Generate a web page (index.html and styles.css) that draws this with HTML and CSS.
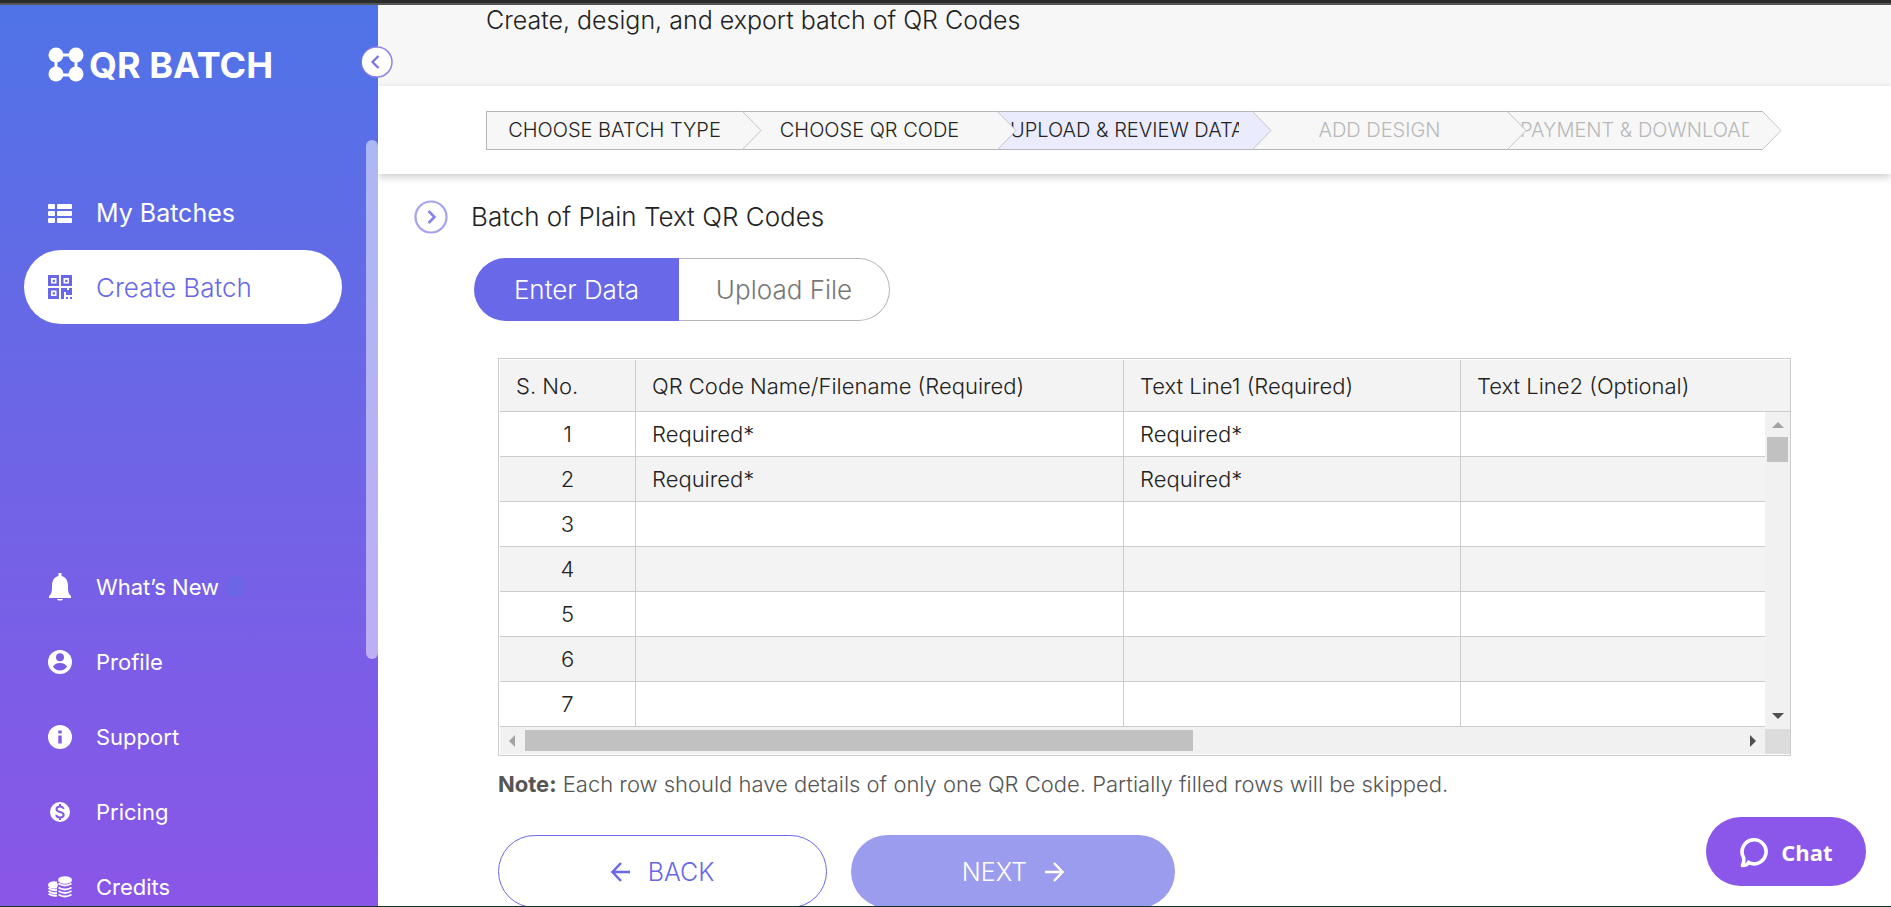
FILE: index.html
```
<!DOCTYPE html>
<html lang="en">
	<head>
		<meta charset="UTF-8">
		<title>QR Batch</title>
		<link rel="stylesheet" href="styles.css">
	</head>
	<body>
	  <aside class="sidebar">
	    <a class="logo" href="#">
	      <svg width="36" height="36" viewBox="0 0 36 36" fill="#fff">
	        <path d="M8 8H28V28H8Z" fill="none" stroke="#fff" stroke-width="3"/>
	        <circle cx="8" cy="8" r="7.5"/>
	        <circle cx="28" cy="8" r="7.5"/>
	        <circle cx="8" cy="27" r="7.5"/>
	        <circle cx="28" cy="27" r="7.5"/>
	      </svg>
	      <span>QR BATCH</span>
	    </a>
	    <button class="collapse" title="Collapse">
	      <svg width="32" height="32" viewBox="0 0 32 32">
	        <circle cx="16" cy="16" r="15" fill="#fff" stroke="#8f83ea" stroke-width="1.5"/>
	        <circle cx="15" cy="16" r="14" fill="#fff"/>
	        <path d="M17.5 10L11.5 16L17.5 22" fill="none" stroke="#7a6fe6" stroke-width="2.2"/>
	      </svg>
	    </button>
	    <nav class="nav nav-top">
	      <a href="#">
	        <svg width="24" height="24" viewBox="0 0 24 24" fill="#fff">
	          <rect x="0" y="3" width="7" height="5" rx="1"/><rect x="9" y="3" width="15" height="5" rx="1"/>
	          <rect x="0" y="10" width="7" height="5" rx="1"/><rect x="9" y="10" width="15" height="5" rx="1"/>
	          <rect x="0" y="17" width="7" height="5" rx="1"/><rect x="9" y="17" width="15" height="5" rx="1"/>
	        </svg>
	        <span>My Batches</span>
	      </a>
	      <a href="#" class="active">
	        <svg width="24" height="24" viewBox="0 0 24 24" fill="#6868e8">
	          <path fill-rule="evenodd" d="M0 0H11V11H0ZM3 3V8.500H8.500V3ZM13 0H24V11H13ZM15.500 3V8.500H21V3ZM0 13H11V24H0ZM3 15.500V21H8.500V15.500Z"/>
	          <path d="M4.700 4.700H7V7H4.700ZM17.200 4.700H19.500V7H17.200ZM4.700 17.200H7V19.500H4.700ZM13 13H19V15H21V13H24V20H18V17H16V24H13ZM18 22H20V24H18ZM22 22H24V24H22Z"/>
	        </svg>
	        <span>Create Batch</span>
	      </a>
	    </nav>
	    <nav class="nav nav-bottom">
	      <a href="#">
	        <svg width="24" height="28" viewBox="0 0 24 28" fill="#fff">
	          <path d="M10.500 0H13.500V3C18 4 20 8 20 13C20 19 20.500 21 23 23V25H1V23C3.500 21 4 19 4 13C4 8 6 4 10.500 3ZM9 26H15C14.500 28 9.500 28 9 26Z"/>
	        </svg>
	        <span>What’s New</span><i class="dot"></i>
	      </a>
	      <a href="#">
	        <svg width="24" height="24" viewBox="0 0 24 24">
	          <circle cx="12" cy="12" r="12" fill="#fff"/>
	          <circle cx="12" cy="7.200" r="4" fill="#7c5de6"/>
	          <path d="M5 16.500C6.500 14 9 13 12 13C15 13 17.500 14 19 16.500C17.500 19 15 20.500 12 20.500C9 20.500 6.500 19 5 16.500Z" fill="#7c5de6"/>
	        </svg>
	        <span>Profile</span>
	      </a>
	      <a href="#">
	        <svg width="24" height="24" viewBox="0 0 24 24">
	          <circle cx="12" cy="12" r="12" fill="#fff"/>
	          <path d="M10.300 5.500H13.700V8.500H10.300ZM10.300 10.500H13.700V18.500H10.300Z" fill="#7f5be6"/>
	        </svg>
	        <span>Support</span>
	      </a>
	      <a href="#">
	        <svg width="24" height="24" viewBox="0 0 24 24">
	          <circle cx="12" cy="12" r="10" fill="#fff"/>
	          <path d="M15.500 9C15.500 7.500 14 6.600 12 6.600C10 6.600 8.500 7.600 8.500 9.200C8.500 13 15.700 10.800 15.700 14.800C15.700 16.500 14 17.400 12 17.400C10 17.400 8.300 16.500 8.300 14.800M12 4V7M12 17V20" fill="none" stroke="#8459e6" stroke-width="2"/>
	        </svg>
	        <span>Pricing</span>
	      </a>
	      <a href="#">
	        <svg width="24" height="22" viewBox="0 0 24 22" fill="#fff">
	          <ellipse cx="17" cy="4" rx="7" ry="3.800"/>
	          <ellipse cx="5" cy="9" rx="5" ry="3.500"/>
	          <path d="M5 5.500H9V12.500H5Z"/>
	          <path d="M10.500 7.500Q17 11.500 23.500 7.500M10.500 11.500Q17 15.500 23.500 11.500M10.500 15Q17 19 23.500 15M10.500 18.500Q17 22.500 23.500 18.500M0.500 12Q4 15 9 14M0.500 15Q4 18 9 17M0.500 17.800Q4 20.500 9 19.600" fill="none" stroke="#fff" stroke-width="1.900"/>
	        </svg>
	        <span>Credits</span>
	      </a>
	    </nav>
	    <div class="side-thumb"></div>
	  </aside>

	  <main class="main">
	    <header class="header">Create, design, and export batch of QR Codes</header>
	    <div class="wizard">
	      <ol class="steps">
	        <li><span>CHOOSE BATCH TYPE</span><svg viewBox="0 0 20 39"><path d="M0 0L19 19.500L0 39"/></svg></li>
	        <li><span>CHOOSE QR CODE</span><svg viewBox="0 0 20 39"><path d="M0 0L19 19.500L0 39"/></svg></li>
	        <li class="current"><span>UPLOAD &amp; REVIEW DATA</span><svg viewBox="0 0 20 39"><path d="M0 0L19 19.500L0 39"/></svg></li>
	        <li class="todo"><span>ADD DESIGN</span><svg viewBox="0 0 20 39"><path d="M0 0L19 19.500L0 39"/></svg></li>
	        <li class="todo"><span>PAYMENT &amp; DOWNLOAD</span><svg viewBox="0 0 20 39"><path d="M0 0L19 19.500L0 39"/></svg></li>
	      </ol>
	    </div>

	    <section class="content">
	      <div class="title">
	        <svg width="34" height="34" viewBox="0 0 34 34" fill="none">
	          <circle cx="17" cy="17" r="15.500" stroke="#a5a2f0" stroke-width="2.200"/>
	          <path d="M14.500 11L20.500 17L14.500 23" stroke="#8583ec" stroke-width="2.500"/>
	        </svg>
	        <h1>Batch of Plain Text QR Codes</h1>
	      </div>
	      <div class="tabs">
	        <button class="tab on">Enter Data</button>
	        <button class="tab">Upload File</button>
	      </div>

	      <div class="sheet">
	        <table>
	          <thead>
	            <tr>
	              <th class="no">S. No.</th>
	              <th class="name">QR Code Name/Filename (Required)</th>
	              <th class="line1">Text Line1 (Required)</th>
	              <th>Text Line2 (Optional)</th>
	            </tr>
	          </thead>
	          <tbody>
	            <tr><td>1</td><td>Required*</td><td>Required*</td><td></td></tr>
	            <tr><td>2</td><td>Required*</td><td>Required*</td><td></td></tr>
	            <tr><td>3</td><td></td><td></td><td></td></tr>
	            <tr><td>4</td><td></td><td></td><td></td></tr>
	            <tr><td>5</td><td></td><td></td><td></td></tr>
	            <tr><td>6</td><td></td><td></td><td></td></tr>
	            <tr><td>7</td><td></td><td></td><td></td></tr>
	          </tbody>
	        </table>
	        <div class="vbar">
	          <svg width="12" height="6" viewBox="0 0 12 6"><path d="M0 6L6 0L12 6Z" fill="#a3a3a3"/></svg>
	          <div class="vthumb"></div>
	          <svg class="down" width="12" height="6" viewBox="0 0 12 6"><path d="M0 0L6 6L12 0Z" fill="#505050"/></svg>
	        </div>
	        <div class="hbar">
	          <svg width="6" height="12" viewBox="0 0 6 12"><path d="M6 0L0 6L6 12Z" fill="#a3a3a3"/></svg>
	          <div class="htrack"><div class="hthumb"></div></div>
	          <svg width="6" height="12" viewBox="0 0 6 12"><path d="M0 0L6 6L0 12Z" fill="#505050"/></svg>
	          <div class="corner"></div>
	        </div>
	      </div>

	      <p class="note"><b>Note:</b> Each row should have details of only one QR Code. Partially filled rows will be skipped.</p>
	      <div class="actions">
	        <button class="btn back">
	          <svg width="20" height="20" viewBox="0 0 20 20"><path d="M19 10H2M10 1L1.500 10L10 19"/></svg>
	          BACK
	        </button>
	        <button class="btn next">
	          NEXT
	          <svg width="20" height="20" viewBox="0 0 20 20"><path d="M1 10H18M10 1L18.500 10L10 19"/></svg>
	        </button>
	      </div>
	    </section>
	  </main>

	  <button class="chat">
	    <svg width="30" height="32" viewBox="0 0 30 32">
	      <path d="M8 25.500A12 12 0 1 0 4.500 21.500C5.500 25 4.500 27 3.500 29.500C6.500 29.500 9 28 9.500 26.500" fill="none" stroke="#fff" stroke-width="3.600" stroke-linejoin="round"/>
	    </svg>
	    <span>Chat</span>
	  </button>
	</body>
</html>
```
FILE: styles.css
```
* {
  box-sizing: border-box;
}
html, body {
  margin: 0;
  padding: 0;
  overflow: hidden;
}
body {
  position: relative;
  display: flex;
  height: 100vh;
  border-top: 3px solid #2b2b2b;
  border-bottom: 1px solid #12302c;
  background: #fff;
  font-family: Inter, "Open Sans", sans-serif;
  font-weight: 300;
  color: #222;
}
button {
  font: inherit;
  cursor: pointer;
}
a {
  color: inherit;
  text-decoration: none;
}

/* sidebar */
.sidebar {
  position: relative;
  z-index: 2;
  flex: none;
  width: 378px;
  border-top: 2px solid #555;
  background: linear-gradient(#5073e8, #6868e6 38%, #8a56e8);
  color: #fff;
}
.logo {
  display: flex;
  align-items: center;
  gap: 5px;
  height: 36px;
  margin: 42px 0 0 48px;
  font-size: 36px;
  font-weight: 700;
}
.collapse {
  position: absolute;
  top: 41px;
  right: -15px;
  padding: 0;
  border: 0;
  background: none;
}
.collapse svg {
  display: block;
}
.nav a {
  display: flex;
  align-items: center;
  height: 75px;
  padding-left: 24px;
  font-size: 22px;
  font-weight: 400;
}
.nav svg {
  flex: none;
  width: 24px;
  margin-right: 24px;
}
.nav-top {
  margin: 93px 36px 0 24px;
}
.nav-top a {
  height: 74px;
  border-radius: 37px;
  font-size: 25px;
}
.nav-top .active {
  background: #fff;
  color: #6868e8;
  font-size: 26px;
  font-weight: 300;
}
.nav-bottom {
  margin: 225px 36px 0 24px;
}
.dot {
  width: 21px;
  height: 21px;
  margin-left: 6px;
  border-radius: 50%;
  background: #6a66e6;
}
.side-thumb {
  position: absolute;
  top: 135px;
  right: 0;
  width: 12px;
  height: 519px;
  border-radius: 6px;
  background: rgba(255, 255, 255, .5);
}

/* main */
.main {
  flex: 1;
  min-width: 0;
  border-top: 2px solid #555;
  overflow: hidden;
}
.header {
  height: 81px;
  padding-left: 108px;
  background: #f7f7f7;
  font-size: 25px;
  line-height: 30px;
}
.wizard {
  padding: 25px 129px 24px 108px;
  box-shadow: 0 3px 8px rgba(0, 0, 0, .2);
}
.steps {
  display: flex;
  height: 39px;
  margin: 0;
  padding: 0;
  border: 1px solid #b5b5b5;
  border-right: 0;
  list-style: none;
  font-size: 20px;
}
.steps li {
  position: relative;
  flex: 1;
  min-width: 0;
  background: #f7f7f7;
  line-height: 36px;
}
.steps span {
  display: block;
  margin: 0 13px;
  overflow: hidden;
  text-align: center;
  white-space: nowrap;
}
.steps svg {
  position: absolute;
  z-index: 1;
  top: -1px;
  right: -20px;
  width: 20px;
  height: 39px;
  fill: #f7f7f7;
  stroke: #c4c4c4;
}
.steps .current {
  background: #eaebfc;
}
.steps .current svg {
  fill: #eaebfc;
}
.steps .todo {
  color: #b8b8b8;
}

.content {
  padding: 26px 100px 0 120px;
}
.title {
  display: flex;
  align-items: center;
  gap: 23px;
  height: 34px;
  margin-left: -84px;
}
.title h1 {
  margin: 0;
  font-size: 26px;
  font-weight: 300;
  line-height: 32px;
}
.tabs {
  display: flex;
  height: 63px;
  margin: 24px 0 37px -24px;
}
.tab {
  width: 211px;
  padding: 0;
  border: 1px solid #b8b4b8;
  border-left: 0;
  border-radius: 0 32px 32px 0;
  background: #fff;
  color: #777;
  font-size: 26px;
}
.tab.on {
  width: 205px;
  border: 0;
  border-radius: 32px 0 0 32px;
  background: #6868e8;
  color: #fff;
}

/* data sheet */
.sheet {
  position: relative;
  padding: 1px 0 1px 1px;
  border: 1px solid #ccc;
}
.sheet table {
  width: 100%;
  table-layout: fixed;
  border-collapse: separate;
  border-spacing: 0;
}
.sheet th, .sheet td {
  height: 45px;
  padding: 0 16px;
  border-right: 1px solid #ccc;
  border-bottom: 1px solid #ccc;
  font-size: 22px;
  font-weight: 300;
  text-align: left;
  white-space: nowrap;
}
.sheet th {
  height: 52px;
  background: #f3f3f3;
}
.sheet th:last-child, .sheet td:last-child {
  border-right: 0;
}
.sheet td:first-child {
  text-align: center;
}
.sheet tbody tr:nth-child(even) {
  background: #f3f3f3;
}
.no {
  width: 136px;
}
.name {
  width: 488px;
}
.line1 {
  width: 337px;
}
.vbar {
  position: absolute;
  top: 53px;
  right: 0;
  bottom: 26px;
  display: flex;
  flex-direction: column;
  align-items: center;
  width: 25px;
  padding: 10px 0;
  background: #f1f1f1;
}
.vthumb {
  width: 21px;
  height: 25px;
  margin-top: 9px;
  background: #c1c1c1;
}
.down {
  margin-top: auto;
}
.hbar {
  display: flex;
  align-items: center;
  height: 27px;
  padding-left: 9px;
  background: #f1f1f1;
}
.htrack {
  flex: 1;
  margin: 0 10px;
}
.hthumb {
  width: 55%;
  height: 21px;
  background: #c1c1c1;
}
.corner {
  align-self: flex-end;
  width: 25px;
  height: 25px;
  margin-left: 9px;
  background: #dcdcdc;
}

.note {
  margin: 14px 0 0;
  color: #555;
  font-size: 22px;
  line-height: 28px;
}
.note b {
  font-weight: 700;
}
.actions {
  display: flex;
  gap: 24px;
  margin-top: 37px;
}
.btn {
  display: flex;
  align-items: center;
  justify-content: center;
  gap: 17px;
  width: 329px;
  height: 73px;
  border: 1px solid #6868e8;
  border-radius: 37px;
  background: #fff;
  color: #6868e8;
  font-size: 25px;
}
.btn svg {
  fill: none;
  stroke: currentColor;
  stroke-width: 2.5;
}
.next {
  width: 324px;
  border: 0;
  background: #9c9cee;
  color: #fff;
}
.chat {
  position: absolute;
  right: 25px;
  bottom: 20px;
  display: flex;
  align-items: center;
  justify-content: center;
  gap: 12px;
  width: 160px;
  height: 69px;
  border: 0;
  border-radius: 35px;
  background: #8a57ea;
  color: #fff;
  font-family: "Open Sans", sans-serif;
  font-size: 22px;
  font-weight: 700;
}
```
